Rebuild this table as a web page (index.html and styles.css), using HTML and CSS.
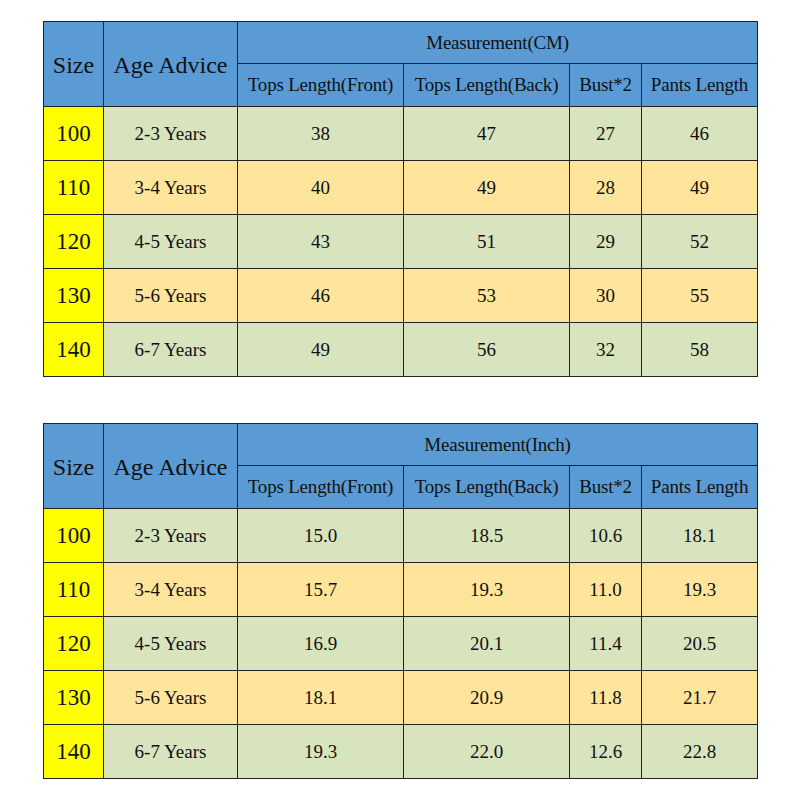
FILE: index.html
```html
<!DOCTYPE html>
<html>
<head>
<meta charset="utf-8">
<link rel="stylesheet" href="styles.css">
</head>
<body>
<div class="page">
<table class="chart">
  <colgroup>
    <col class="c-size"><col class="c-age"><col class="c-front"><col class="c-back"><col class="c-bust"><col class="c-pants">
  </colgroup>
  <thead>
    <tr class="h1">
      <th rowspan="2" class="big">Size</th>
      <th rowspan="2" class="big">Age Advice</th>
      <th colspan="4">Measurement(CM)</th>
    </tr>
    <tr class="h2">
      <th>Tops Length(Front)</th>
      <th>Tops Length(Back)</th>
      <th>Bust*2</th>
      <th>Pants Length</th>
    </tr>
  </thead>
  <tbody>
    <tr class="g"><td class="sz">100</td><td>2-3 Years</td><td>38</td><td>47</td><td>27</td><td>46</td></tr>
    <tr class="o"><td class="sz">110</td><td>3-4 Years</td><td>40</td><td>49</td><td>28</td><td>49</td></tr>
    <tr class="g"><td class="sz">120</td><td>4-5 Years</td><td>43</td><td>51</td><td>29</td><td>52</td></tr>
    <tr class="o"><td class="sz">130</td><td>5-6 Years</td><td>46</td><td>53</td><td>30</td><td>55</td></tr>
    <tr class="g"><td class="sz">140</td><td>6-7 Years</td><td>49</td><td>56</td><td>32</td><td>58</td></tr>
  </tbody>
</table>

<table class="chart">
  <colgroup>
    <col class="c-size"><col class="c-age"><col class="c-front"><col class="c-back"><col class="c-bust"><col class="c-pants">
  </colgroup>
  <thead>
    <tr class="h1">
      <th rowspan="2" class="big">Size</th>
      <th rowspan="2" class="big">Age Advice</th>
      <th colspan="4">Measurement(Inch)</th>
    </tr>
    <tr class="h2">
      <th>Tops Length(Front)</th>
      <th>Tops Length(Back)</th>
      <th>Bust*2</th>
      <th>Pants Length</th>
    </tr>
  </thead>
  <tbody>
    <tr class="g"><td class="sz">100</td><td>2-3 Years</td><td>15.0</td><td>18.5</td><td>10.6</td><td>18.1</td></tr>
    <tr class="o"><td class="sz">110</td><td>3-4 Years</td><td>15.7</td><td>19.3</td><td>11.0</td><td>19.3</td></tr>
    <tr class="g"><td class="sz">120</td><td>4-5 Years</td><td>16.9</td><td>20.1</td><td>11.4</td><td>20.5</td></tr>
    <tr class="o"><td class="sz">130</td><td>5-6 Years</td><td>18.1</td><td>20.9</td><td>11.8</td><td>21.7</td></tr>
    <tr class="g"><td class="sz">140</td><td>6-7 Years</td><td>19.3</td><td>22.0</td><td>12.6</td><td>22.8</td></tr>
  </tbody>
</table>
</div>
</body>
</html>
```

FILE: styles.css
```css
html, body {
  margin: 0;
  padding: 0;
  background: #ffffff;
}

.page {
  padding: 21px 0 0 43px;
  display: flex;
  flex-direction: column;
  gap: 46px;
  font-family: "Liberation Serif", "Times New Roman", serif;
  color: #111111;
}

.chart {
  border-collapse: collapse;
  table-layout: fixed;
  width: 714px;
  border: 1px solid #222222;
}

.c-size { width: 60px; }
.c-age { width: 134px; }
.c-front { width: 166px; }
.c-back { width: 166px; }
.c-bust { width: 72px; }
.c-pants { width: 116px; }

.chart th,
.chart td {
  border: 1px solid #222222;
  padding: 0;
  text-align: center;
  vertical-align: middle;
  font-weight: normal;
  font-size: 19px;
  letter-spacing: -0.2px;
  white-space: nowrap;
}

.chart th {
  background: #5b9bd5;
}

.h1 { height: 42px; }
.h1 th { padding-top: 1px; }
.h2 { height: 43px; }

.chart th.big {
  font-size: 24px;
  letter-spacing: 0;
  padding-top: 3px;
}

.chart tbody tr { height: 54px; }

.chart td { letter-spacing: 0; }

.g td { background: #d8e4bd; }
.o td { background: #fee59b; }

.chart td.sz {
  background: #ffff00;
  font-size: 23px;
  letter-spacing: 0;
}
```
